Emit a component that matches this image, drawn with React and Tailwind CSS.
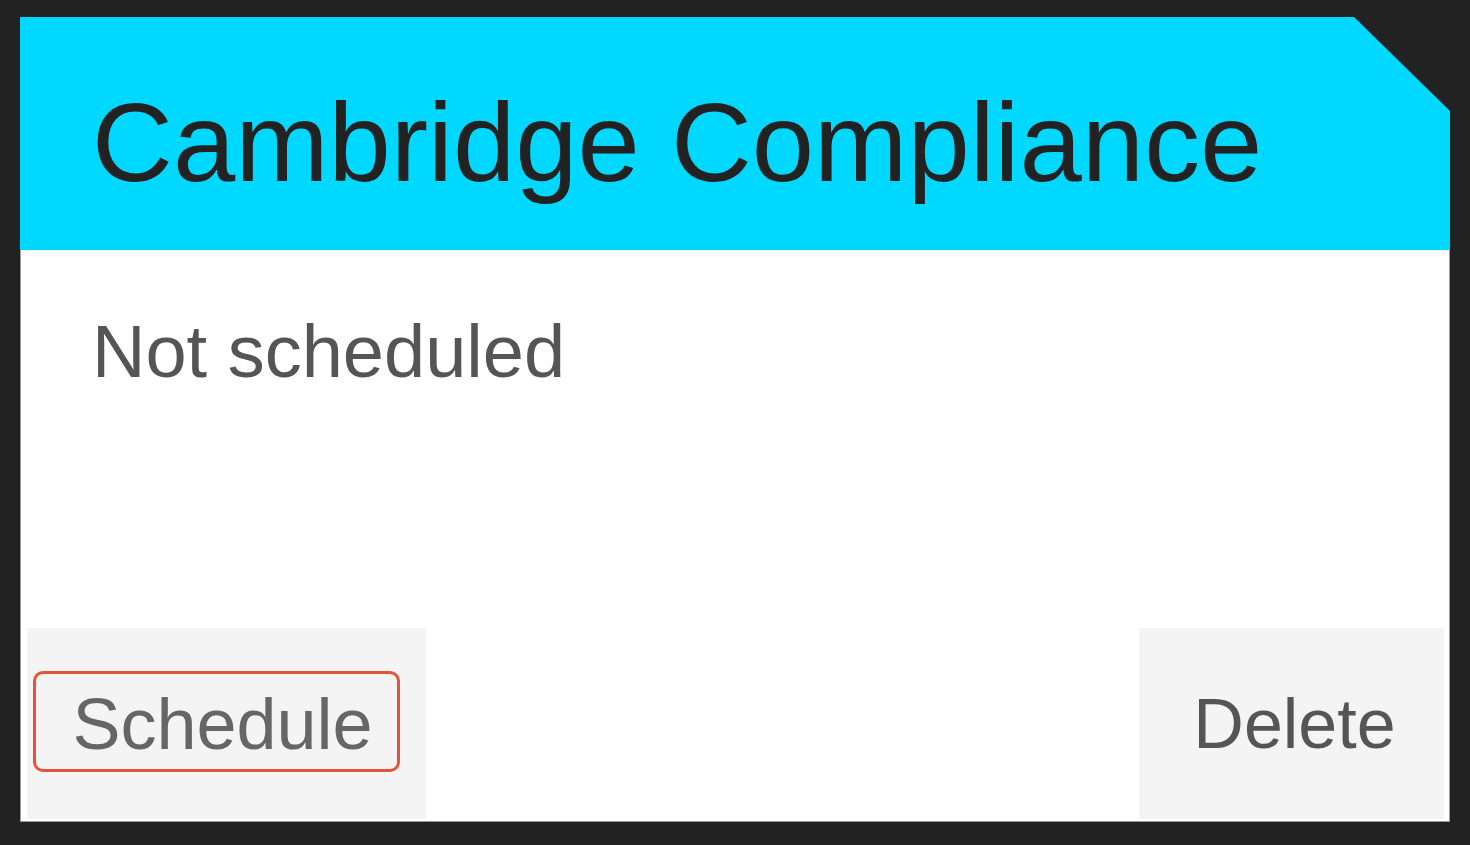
const App = () => {
    return (
        <div className="min-h-screen w-full bg-[#222222] pt-[17px] pl-[20px] pr-[20px] pb-[23px] font-['Liberation_Sans',Arial,sans-serif]">
            <div className="flex h-[805px] flex-col [clip-path:polygon(0_0,calc(100%-96px)_0,100%_94px,100%_100%,0_100%)]">
                <div className="h-[233px] shrink-0 bg-[#00d8ff] pl-[72px] pt-[70px]">
                    <h1 className="text-[112px] leading-none text-[#222222]">Cambridge Compliance</h1>
                </div>
                <div className="flex flex-1 flex-col border-x border-b border-[#9a9a9a] bg-white">
                    <p className="pl-[71px] pt-[65px] text-[74px] leading-none text-[#555555]">Not scheduled</p>
                    <div className="mt-auto flex items-end justify-between pl-[6px] pr-[5px] pb-[2px]">
                        <button className="flex h-[191px] w-[399px] items-center bg-[#f4f4f4] pl-[6px] pb-[4px]">
                            <span className="flex h-[101px] w-[367px] items-center justify-center rounded-[10px] border-[3px] border-[#e5533d] pl-[12px] pt-[4px] text-[72px] leading-none text-[#666666]">
                                Schedule
                            </span>
                        </button>
                        <button className="flex h-[191px] w-[305px] items-center justify-center bg-[#f4f4f4] pl-[6px] text-[70px] leading-none text-[#555555]">
                            Delete
                        </button>
                    </div>
                </div>
            </div>
        </div>
    );
};

export default App;
